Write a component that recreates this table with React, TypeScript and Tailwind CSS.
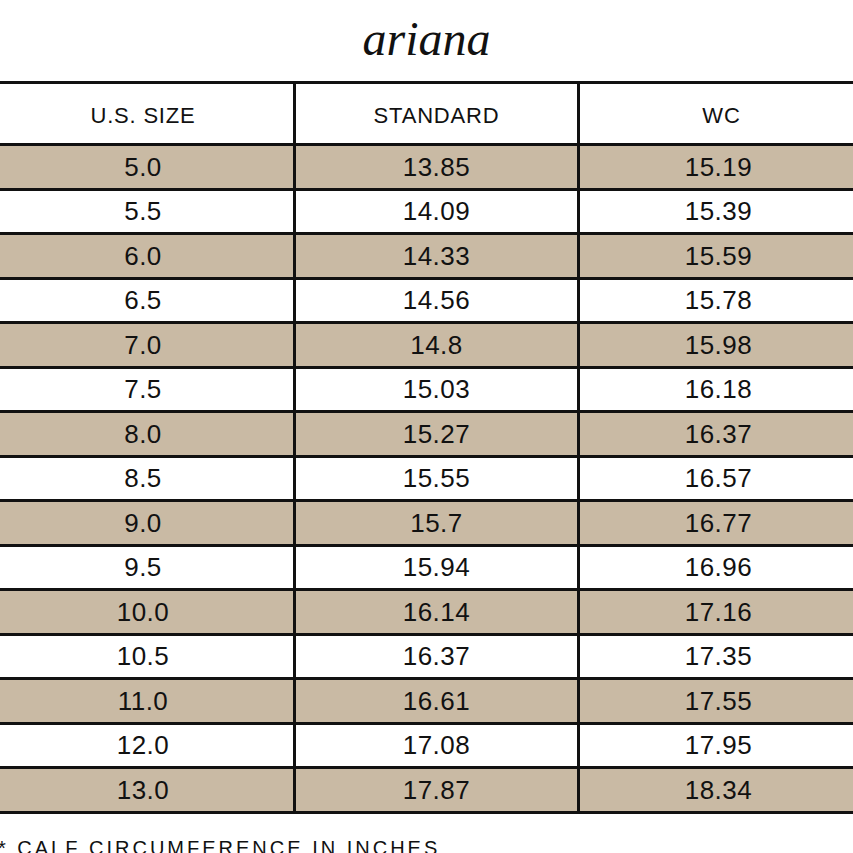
const rows: [string, string, string][] = [
  ["5.0", "13.85", "15.19"],
  ["5.5", "14.09", "15.39"],
  ["6.0", "14.33", "15.59"],
  ["6.5", "14.56", "15.78"],
  ["7.0", "14.8", "15.98"],
  ["7.5", "15.03", "16.18"],
  ["8.0", "15.27", "16.37"],
  ["8.5", "15.55", "16.57"],
  ["9.0", "15.7", "16.77"],
  ["9.5", "15.94", "16.96"],
  ["10.0", "16.14", "17.16"],
  ["10.5", "16.37", "17.35"],
  ["11.0", "16.61", "17.55"],
  ["12.0", "17.08", "17.95"],
  ["13.0", "17.87", "18.34"],
];

const App = () => {
  return (
    <div className="w-[853px] h-[853px] overflow-hidden bg-white text-[#111] font-['Liberation_Sans',Arial,sans-serif]">
      {/* Title */}
      <div className="h-[81px] pt-[15px] text-center">
        <h1 className="text-[48px] leading-none italic font-['Liberation_Serif','Times_New_Roman',serif]">
          ariana
        </h1>
      </div>

      {/* Size table */}
      <div className="ml-[-7px] w-[864px]">
        <div className="grid grid-cols-[303px_284px_277px] h-[65px] border-y-[3px] border-[#111] text-[22px] leading-none tracking-[0.8px]">
          <div className="flex items-center justify-center pt-[4px] border-r-[3px] border-[#111]">U.S. SIZE</div>
          <div className="flex items-center justify-center pt-[4px] border-r-[3px] border-[#111]">STANDARD</div>
          <div className="flex items-center justify-center pt-[4px] pl-[6px]">WC</div>
        </div>
        {rows.map((r, i) => (
          <div
            key={r[0]}
            className={`grid grid-cols-[303px_284px_277px] h-[44.5px] border-b-[3px] border-[#111] text-[26px] leading-none tracking-[0.5px] ${
              i % 2 === 0 ? "bg-[#c9baa4]" : "bg-white"
            }`}
          >
            <div className="flex items-center justify-center border-r-[3px] border-[#111]">{r[0]}</div>
            <div className="flex items-center justify-center border-r-[3px] border-[#111]">{r[1]}</div>
            <div className="flex items-center justify-center">{r[2]}</div>
          </div>
        ))}
      </div>

      {/* Footnote */}
      <p className="mt-[24px] ml-[-2px] text-[20px] leading-none tracking-[3px] whitespace-nowrap">
        * CALF CIRCUMFERENCE IN INCHES
      </p>
    </div>
  );
};

export default App;
